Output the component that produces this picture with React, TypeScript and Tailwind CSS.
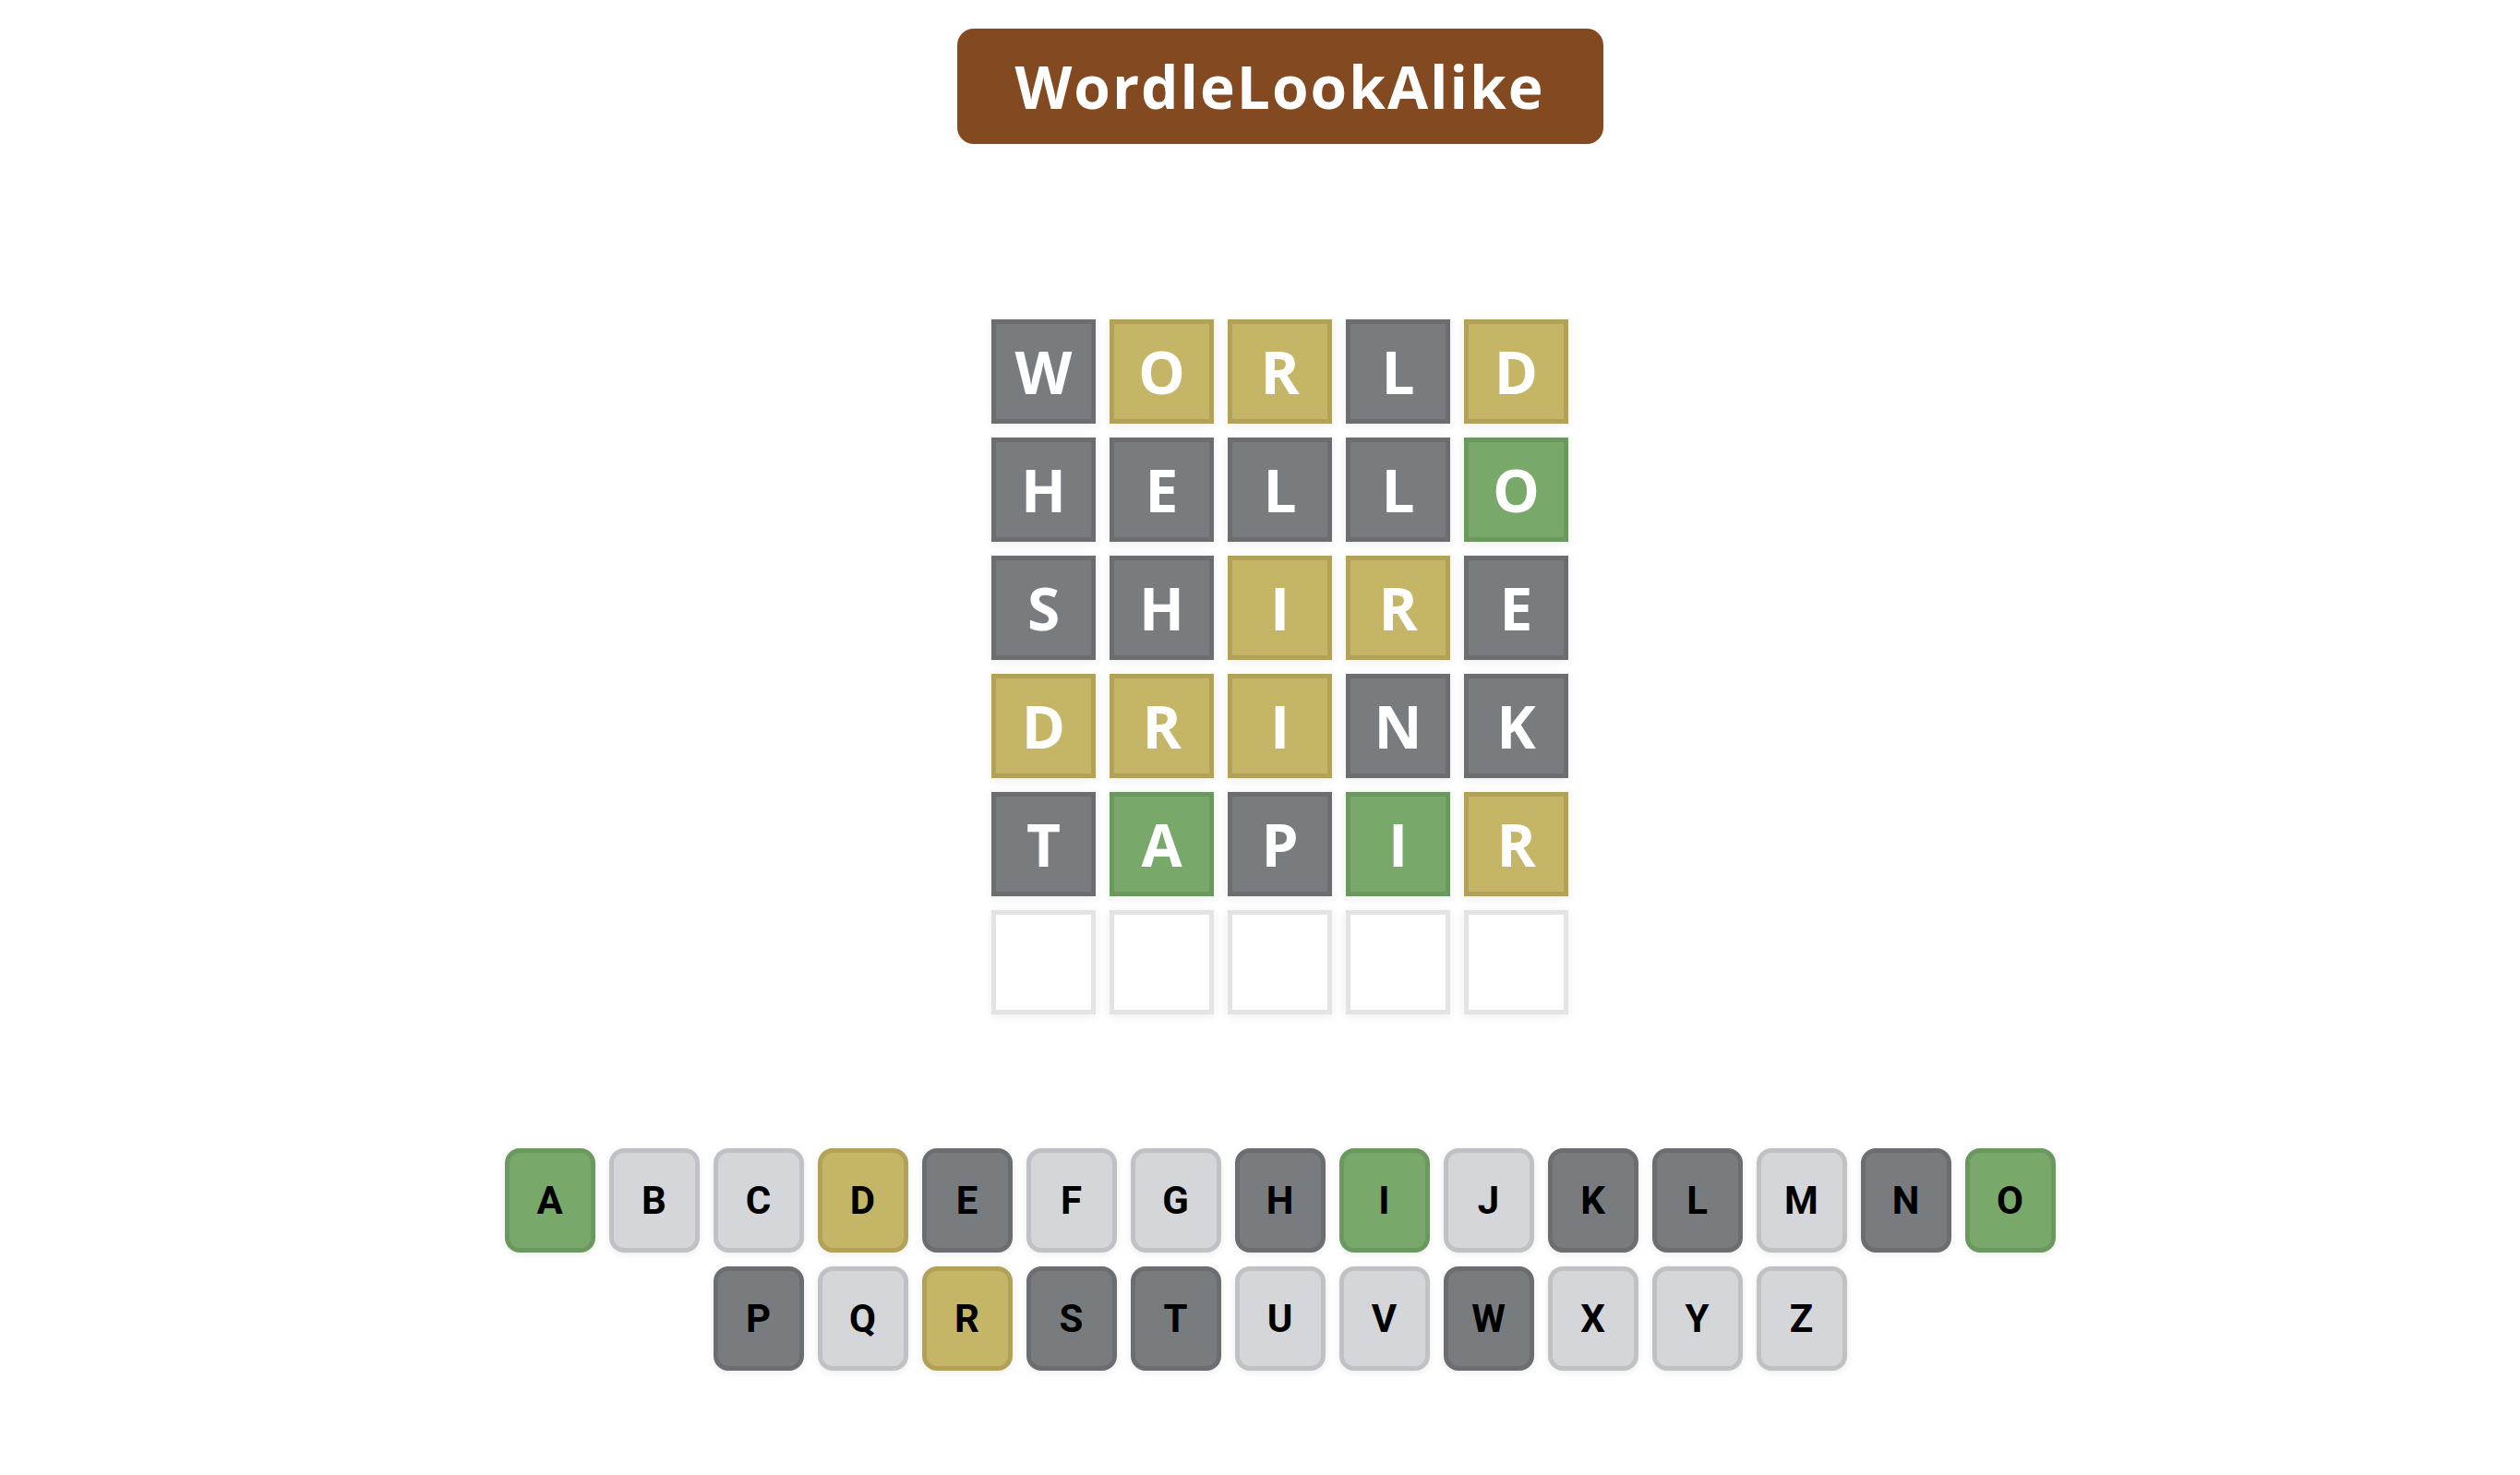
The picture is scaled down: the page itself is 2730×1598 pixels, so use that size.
type State = "gray" | "yellow" | "green" | "empty" | "light";

const guesses: [string, State[]][] = [
  ["WORLD", ["gray", "yellow", "yellow", "gray", "yellow"]],
  ["HELLO", ["gray", "gray", "gray", "gray", "green"]],
  ["SHIRE", ["gray", "gray", "yellow", "yellow", "gray"]],
  ["DRINK", ["yellow", "yellow", "yellow", "gray", "gray"]],
  ["TAPIR", ["gray", "green", "gray", "green", "yellow"]],
  ["     ", ["empty", "empty", "empty", "empty", "empty"]],
];

const keyRows: [string, State][][] = [
  [
    ["A", "green"], ["B", "light"], ["C", "light"], ["D", "yellow"], ["E", "gray"],
    ["F", "light"], ["G", "light"], ["H", "gray"], ["I", "green"], ["J", "light"],
    ["K", "gray"], ["L", "gray"], ["M", "light"], ["N", "gray"], ["O", "green"],
  ],
  [
    ["P", "gray"], ["Q", "light"], ["R", "yellow"], ["S", "gray"], ["T", "gray"],
    ["U", "light"], ["V", "light"], ["W", "gray"], ["X", "light"], ["Y", "light"], ["Z", "light"],
  ],
];

const tileColors: Record<State, string> = {
  gray: "bg-[#787c7f] border-[#6c6d70]",
  yellow: "bg-[#c5b566] border-[#b2a158]",
  green: "bg-[#79a86b] border-[#6a985f]",
  empty: "bg-white border-[#e3e3e3]",
  light: "bg-[#d4d6da] border-[#c0c1c4]",
};

const Tile = ({ letter, state }: { letter: string; state: State }) => (
  <div
    className={`${tileColors[state]} w-[113px] h-[113px] border-[5px] flex items-center justify-center text-white text-[64px] font-bold leading-none shadow-[0_2px_10px_rgba(0,0,0,0.08)]`}
  >
    {letter.trim()}
  </div>
);

const Key = ({ letter, state }: { letter: string; state: State }) => (
  <div
    className={`${tileColors[state]} w-[98px] h-[113px] border-[5px] rounded-[16px] flex items-center justify-center text-black text-[42px] font-bold leading-none shadow-[0_2px_8px_rgba(0,0,0,0.08)] font-['Roboto','Liberation_Sans',sans-serif]`}
  >
    {letter}
  </div>
);

export default function App() {
  return (
    <main className="min-h-screen bg-white pl-[43px] flex flex-col items-center font-['Open_Sans',sans-serif]">
      <h1 className="mt-[31px] w-[700px] h-[125px] rounded-[18px] bg-[#834a21] flex items-center justify-center text-white text-[64px] font-bold tracking-[2px] leading-none">
        WordleLookAlike
      </h1>

      <section className="mt-[190px] flex flex-col gap-[15px]">
        {guesses.map(([word, states], r) => (
          <div key={r} className="flex gap-[15px]">
            {states.map((s, i) => (
              <Tile key={i} letter={word[i]} state={s} />
            ))}
          </div>
        ))}
      </section>

      <section className="mt-[145px] flex flex-col items-center gap-[15px]">
        {keyRows.map((row, r) => (
          <div key={r} className="flex gap-[15px]">
            {row.map(([l, s]) => (
              <Key key={l} letter={l} state={s} />
            ))}
          </div>
        ))}
      </section>
    </main>
  );
}
